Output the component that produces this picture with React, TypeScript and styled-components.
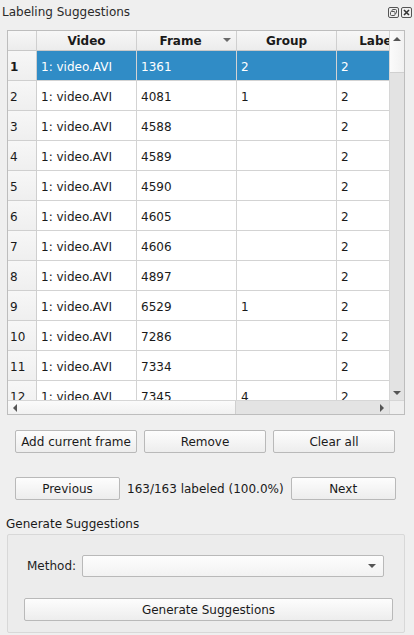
import React from "react";
import styled, { createGlobalStyle } from "styled-components";

const Global = createGlobalStyle`
  html, body { margin: 0; padding: 0; background: #efefef; }
  body { font-family: "DejaVu Sans", "Noto Sans", sans-serif; font-size: 12px; color: #1e1e1e; }
  * { box-sizing: border-box; }
`;

const Dock = styled.div`
  width: 414px;
  height: 635px;
  display: flex;
  flex-direction: column;
  background: #efefef;
  overflow: hidden;
`;

const TitleBar = styled.div`
  flex: none;
  height: 24px;
  display: flex;
  align-items: flex-start;
  justify-content: space-between;
  padding: 4px 2px 0 2px;
`;

const Title = styled.div`
  font-size: 12px;
  line-height: 16px;
  color: #2a2a2a;
`;

const TitleIcons = styled.div`
  display: flex;
  gap: 2px;
  padding-top: 3px;
`;

const Body = styled.div`
  flex: none;
  display: flex;
  flex-direction: column;
  padding: 6px 10px 0 7px;
`;

const TableFrame = styled.div`
  flex: none;
  width: 398px;
  height: 385px;
  border: 1px solid #bdbdbd;
  background: #ffffff;
  display: grid;
  grid-template-columns: 1fr 15px;
  grid-template-rows: 1fr 14px;
`;

const Viewport = styled.div`
  overflow: hidden;
  position: relative;
`;

const Grid = styled.div`
  display: grid;
  grid-template-columns: 29px 100px 100px 100px 82px;
  grid-auto-rows: 30px;
  grid-template-rows: 20px;
  width: 411px;
`;

const HeadCell = styled.div<{ $sorted?: boolean }>`
  background: linear-gradient(#f7f7f7, #ececec);
  border-right: 1px solid #cfcfcf;
  border-bottom: 1px solid #c8c8c8;
  font-weight: bold;
  font-size: 12px;
  color: #1a1a1a;
  display: flex;
  align-items: center;
  justify-content: center;
  padding-right: ${(p) => (p.$sorted ? "12px" : "0")};
  position: relative;
  white-space: nowrap;
  overflow: hidden;
`;

const SortArrow = styled.span`
  position: absolute;
  right: 5px;
  top: 7px;
  width: 0;
  height: 0;
  border-left: 4px solid transparent;
  border-right: 4px solid transparent;
  border-top: 4px solid #6a6a6a;
`;

const RowHead = styled.div<{ $sel?: boolean }>`
  background: linear-gradient(#f7f7f7, #efefef);
  border-right: 1px solid #cfcfcf;
  border-bottom: 1px solid #cfcfcf;
  font-weight: ${(p) => (p.$sel ? "bold" : "normal")};
  color: #1a1a1a;
  display: flex;
  align-items: center;
  padding-left: 2px;
  padding-top: 2px;
`;

const Cell = styled.div<{ $sel?: boolean }>`
  background: ${(p) => (p.$sel ? "#308cc6" : "#ffffff")};
  color: ${(p) => (p.$sel ? "#ffffff" : "#1a1a1a")};
  border-right: 1px solid #d3d3d3;
  border-bottom: 1px solid #d3d3d3;
  display: flex;
  align-items: center;
  padding-left: 4px;
  padding-top: 2px;
  white-space: nowrap;
  overflow: hidden;
`;

const VScroll = styled.div`
  background: #e3e3e3;
  border-left: 1px solid #d6d6d6;
  display: flex;
  flex-direction: column;
  justify-content: space-between;
`;

const VHandle = styled.div`
  height: 42px;
  background: linear-gradient(90deg, #fbfbfb, #f1f1f1);
  border-bottom: 1px solid #d0d0d0;
  display: flex;
  justify-content: center;
  padding-top: 6px;
`;

const ArrowBox = styled.div`
  height: 15px;
  display: flex;
  align-items: center;
  justify-content: center;
`;

const HScroll = styled.div`
  background: #e3e3e3;
  border-top: 1px solid #d6d6d6;
  display: flex;
  align-items: stretch;
`;

const HHandle = styled.div`
  width: 228px;
  background: linear-gradient(#fbfbfb, #f1f1f1);
  border-right: 1px solid #cfcfcf;
  display: flex;
  align-items: center;
  padding-left: 5px;
`;

const HTrack = styled.div`
  flex: 1;
  display: flex;
  align-items: center;
  justify-content: flex-end;
  padding-right: 5px;
`;

const Corner = styled.div`
  background: #efefef;
  border-top: 1px solid #d6d6d6;
  border-left: 1px solid #d6d6d6;
`;

const Tri = styled.span<{ $dir: "up" | "down" | "left" | "right" }>`
  width: 0;
  height: 0;
  ${(p) =>
    p.$dir === "up"
      ? "border-left:4px solid transparent;border-right:4px solid transparent;border-bottom:4px solid #555;"
      : p.$dir === "down"
      ? "border-left:4px solid transparent;border-right:4px solid transparent;border-top:4px solid #555;"
      : p.$dir === "left"
      ? "border-top:4px solid transparent;border-bottom:4px solid transparent;border-right:4px solid #555;"
      : "border-top:4px solid transparent;border-bottom:4px solid transparent;border-left:4px solid #555;"}
`;

const ButtonRow = styled.div<{ $top: number }>`
  flex: none;
  display: flex;
  align-items: center;
  gap: 7px;
  margin-top: ${(p) => p.$top}px;
  padding-left: 8px;
  width: 388px;
`;

const Button = styled.button<{ $w: number }>`
  width: ${(p) => p.$w}px;
  flex: none;
  height: 23px;
  border: 1px solid #b9b9b9;
  border-radius: 2px;
  background: linear-gradient(#fdfdfd, #ededed);
  font-family: "DejaVu Sans", "Noto Sans", sans-serif;
  font-size: 12px;
  color: #1a1a1a;
  padding: 0;
`;

const Status = styled.div`
  flex: 1;
  font-size: 12px;
  color: #1a1a1a;
  white-space: nowrap;
  text-align: center;
`;

const SectionLabel = styled.div`
  flex: none;
  margin-top: 17px;
  margin-left: -1px;
  font-size: 12px;
  line-height: 14px;
  color: #1a1a1a;
`;

const GroupBox = styled.div`
  flex: none;
  margin-top: 3px;
  width: 398px;
  height: 99px;
  border: 1px solid #d8d8d8;
  border-radius: 2px;
  background: #ececec;
  display: flex;
  flex-direction: column;
  padding: 20px 0 0 16px;
`;

const FormRow = styled.div`
  display: flex;
  align-items: center;
  gap: 6px;
  padding-left: 3px;
`;

const Combo = styled.div`
  width: 302px;
  height: 22px;
  border: 1px solid #b9b9b9;
  border-radius: 2px;
  background: linear-gradient(#fdfdfd, #f2f2f2);
  display: flex;
  align-items: center;
  justify-content: flex-end;
  padding-right: 7px;
`;

const WideButton = styled(Button)`
  margin-top: 21px;
`;

const rows: [string, string, string, string][] = [
  ["1", "1361", "2", "2"],
  ["2", "4081", "1", "2"],
  ["3", "4588", "", "2"],
  ["4", "4589", "", "2"],
  ["5", "4590", "", "2"],
  ["6", "4605", "", "2"],
  ["7", "4606", "", "2"],
  ["8", "4897", "", "2"],
  ["9", "6529", "1", "2"],
  ["10", "7286", "", "2"],
  ["11", "7334", "", "2"],
  ["12", "7345", "4", "2"],
  ["13", "7346", "", "2"],
];

const FloatIcon = () => (
  <svg width="11" height="11" viewBox="0 0 11 11">
    <rect x="0.5" y="0.5" width="10" height="10" rx="1.5" fill="none" stroke="#555" />
    <rect x="4" y="2.5" width="4.5" height="4" rx="1" fill="none" stroke="#555" />
    <rect x="2.5" y="4.5" width="4.5" height="4" rx="1" fill="#efefef" stroke="#555" />
  </svg>
);

const CloseIcon = () => (
  <svg width="11" height="11" viewBox="0 0 11 11">
    <rect x="0.5" y="0.5" width="10" height="10" rx="1.5" fill="none" stroke="#555" />
    <path d="M3 3 L8 8 M8 3 L3 8" stroke="#333" strokeWidth="1.6" />
  </svg>
);

export default function App() {
  return (
    <Dock>
      <Global />
      <TitleBar>
        <Title>Labeling Suggestions</Title>
        <TitleIcons>
          <FloatIcon />
          <CloseIcon />
        </TitleIcons>
      </TitleBar>
      <Body>
        <TableFrame>
          <Viewport>
            <Grid>
              <HeadCell />
              <HeadCell>Video</HeadCell>
              <HeadCell $sorted>
                Frame
                <SortArrow />
              </HeadCell>
              <HeadCell>Group</HeadCell>
              <HeadCell>Label</HeadCell>
              {rows.map(([n, frame, group, label], i) => (
                <React.Fragment key={n}>
                  <RowHead $sel={i === 0}>{n}</RowHead>
                  <Cell $sel={i === 0}>1: video.AVI</Cell>
                  <Cell $sel={i === 0}>{frame}</Cell>
                  <Cell $sel={i === 0}>{group}</Cell>
                  <Cell $sel={i === 0}>{label}</Cell>
                </React.Fragment>
              ))}
            </Grid>
          </Viewport>
          <VScroll>
            <VHandle>
              <Tri $dir="up" />
            </VHandle>
            <ArrowBox>
              <Tri $dir="down" />
            </ArrowBox>
          </VScroll>
          <HScroll>
            <HHandle>
              <Tri $dir="left" />
            </HHandle>
            <HTrack>
              <Tri $dir="right" />
            </HTrack>
          </HScroll>
          <Corner />
        </TableFrame>
        <ButtonRow $top={15}>
          <Button $w={122}>Add current frame</Button>
          <Button $w={122}>Remove</Button>
          <Button $w={122}>Clear all</Button>
        </ButtonRow>
        <ButtonRow $top={24}>
          <Button $w={105}>Previous</Button>
          <Status>163/163 labeled (100.0%)</Status>
          <Button $w={105}>Next</Button>
        </ButtonRow>
        <SectionLabel>Generate Suggestions</SectionLabel>
        <GroupBox>
          <FormRow>
            <span>Method:</span>
            <Combo>
              <Tri $dir="down" />
            </Combo>
          </FormRow>
          <WideButton $w={369}>Generate Suggestions</WideButton>
        </GroupBox>
      </Body>
    </Dock>
  );
}
